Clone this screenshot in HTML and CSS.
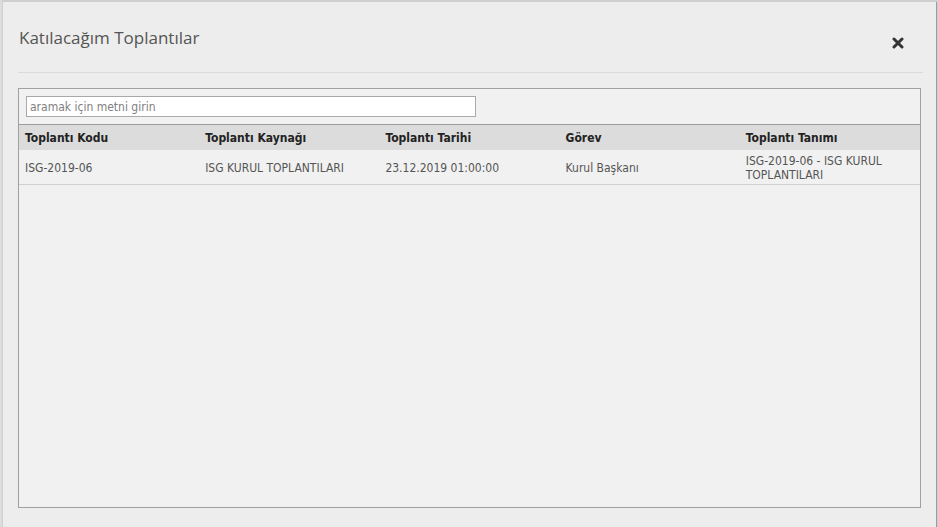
FILE: index.html
```html
<!DOCTYPE html>
<html lang="tr">
<head>
<meta charset="utf-8">
<title>Katılacağım Toplantılar</title>
<link rel="stylesheet" href="styles.css">
</head>
<body>
<div class="modal">
  <div class="modal-header">
    <h4 class="modal-title">Katılacağım Toplantılar</h4>
    <button class="close" type="button" aria-label="Kapat">
      <svg width="12" height="12" viewBox="0 0 12 12"><path d="M2 2 L10 10 M10 2 L2 10" stroke="#333" stroke-width="3" stroke-linecap="round"/></svg>
    </button>
  </div>
  <div class="panel">
    <div class="search-wrap">
      <input class="search" type="text" placeholder="aramak için metni girin">
    </div>
    <table class="grid">
      <thead>
        <tr>
          <th>Toplantı Kodu</th>
          <th>Toplantı Kaynağı</th>
          <th>Toplantı Tarihi</th>
          <th>Görev</th>
          <th>Toplantı Tanımı</th>
        </tr>
      </thead>
      <tbody>
        <tr>
          <td>ISG-2019-06</td>
          <td>ISG KURUL TOPLANTILARI</td>
          <td>23.12.2019 01:00:00</td>
          <td>Kurul Başkanı</td>
          <td>ISG-2019-06 - ISG KURUL TOPLANTILARI</td>
        </tr>
      </tbody>
    </table>
  </div>
</div>
</body>
</html>
```
FILE: styles.css
```css
html, body {
  margin: 0;
  padding: 0;
}
body {
  background: linear-gradient(to right, #e2e2e2, #cfcfcf 3px);
  height: 527px;
  overflow: hidden;
  padding-top: 2px;
  box-sizing: border-box;
}
.modal {
  margin-left: 3px;
  width: 934px;
  height: 525px;
  box-sizing: border-box;
  background: #ededed;
  border-right: 1px solid #9c9c9c;
  display: flex;
  flex-direction: column;
}
.modal-header {
  margin: 0 13px 0 15px;
  height: 70px;
  border-bottom: 1px solid #dadada;
  display: flex;
  justify-content: space-between;
  align-items: flex-start;
}
.modal-title {
  margin: 24px 0 0 1px;
  font-family: "Open Sans", sans-serif;
  font-weight: 400;
  font-size: 17px;
  line-height: 24px;
  color: #555;
}
.close {
  margin: 35px 19px 0 0;
  padding: 0;
  border: 0;
  background: none;
  width: 12px;
  height: 12px;
  display: flex;
}
.panel {
  margin: 15px 0 0 15px;
  width: 903px;
  height: 420px;
  box-sizing: border-box;
  border: 1px solid #a0a0a0;
  background: #f1f1f1;
}
.search-wrap {
  padding: 7px;
}
.search {
  display: block;
  width: 450px;
  height: 21px;
  box-sizing: border-box;
  margin: 0;
  padding: 0 3px;
  border: 1px solid #aaa;
  background: #fff;
  font-family: "DejaVu Sans Condensed", "DejaVu Sans", sans-serif;
  font-size: 12px;
  color: #333;
  outline: none;
}
.search::placeholder {
  color: #808080;
}
.grid {
  width: 100%;
  border-collapse: collapse;
  table-layout: fixed;
  font-family: "DejaVu Sans Condensed", "DejaVu Sans", sans-serif;
  font-size: 12px;
}
.grid th {
  text-align: left;
  font-weight: bold;
  color: #222;
  background: #dcdcdc;
  border-top: 1px solid #9e9e9e;
  height: 25px;
  padding: 0 6px;
  vertical-align: middle;
}
.grid td {
  color: #555;
  height: 33px;
  padding: 1px 6px 0;
  vertical-align: middle;
  line-height: 14px;
  border-bottom: 1px solid #d0d0d0;
}
```
